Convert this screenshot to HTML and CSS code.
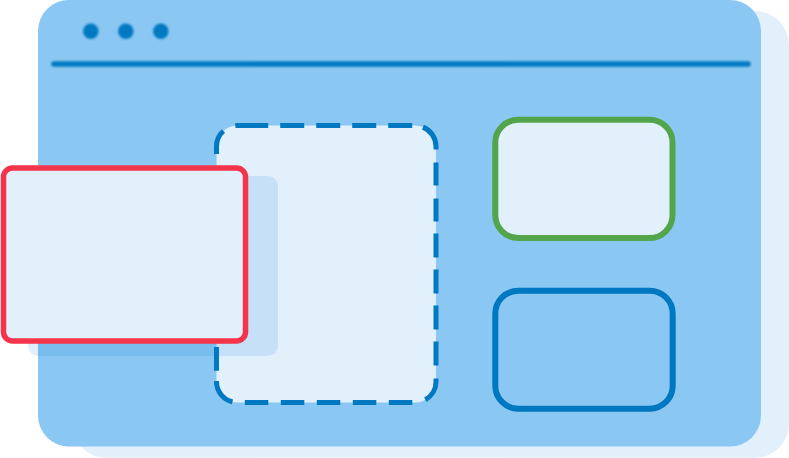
FILE: index.html
```html
<!DOCTYPE html>
<html lang="en">
<head>
<meta charset="utf-8">
<title>Layout illustration</title>
<link rel="stylesheet" href="styles.css">
</head>
<body>
<main class="canvas">
  <svg class="art" viewBox="0 0 789 458" width="789" height="458" xmlns="http://www.w3.org/2000/svg">
    <defs>
      <filter id="soft" x="-5%" y="-50%" width="110%" height="200%">
        <feGaussianBlur stdDeviation="1"/>
      </filter>
    </defs>
    <rect class="back-window" x="72" y="11" width="717" height="446.8" rx="34"/>
    <rect class="main-window" x="38" y="0" width="723" height="446.5" rx="31"/>
    <g class="chrome" filter="url(#soft)">
      <circle cx="90.8" cy="31.3" r="7.8"/>
      <circle cx="125.8" cy="31.3" r="7.8"/>
      <circle cx="160.8" cy="31.3" r="7.8"/>
      <line class="divider" x1="54" y1="64" x2="748" y2="64"/>
    </g>
    <path class="dashed-box" d="M216.5 146.5 A21 21 0 0 1 237.5 125.5 H415 A21 21 0 0 1 436 146.5 V381.5 A21 21 0 0 1 415 402.5 H237.5 A21 21 0 0 1 216.5 381.5 Z"/>
    <rect class="red-shadow" x="28" y="176" width="250" height="180" rx="10"/>
    <rect class="red-box" x="3.5" y="168" width="242" height="173" rx="9"/>
    <rect class="green-box" x="495.3" y="119.7" width="177.2" height="118.3" rx="23"/>
    <rect class="blue-box" x="495.3" y="290.7" width="177.4" height="118" rx="23"/>
  </svg>
</main>
</body>
</html>
```

FILE: styles.css
```css
html, body {
  margin: 0;
  padding: 0;
  background: #ffffff;
  font-family: "Liberation Sans", Arial, sans-serif;
}

.canvas {
  width: 789px;
  height: 458px;
  overflow: hidden;
}

.art {
  display: block;
}

.back-window {
  fill: #e2f0fb;
}

.main-window {
  fill: #8ac7f2;
}

.chrome circle {
  fill: #0079c2;
}

.divider {
  stroke: #0079c2;
  stroke-width: 5.5;
  stroke-linecap: round;
}

.dashed-box {
  fill: #e2f0fb;
  stroke: #0078c2;
  stroke-width: 5;
  stroke-dasharray: 17.3 13.2 33 12 24 12 24 12 24 12 24 10.9 27.6 13 23 13 23 12 24 12 24 12 24 12 24 13 25 13.5 23.5 12.5 23.5 12.5 23.5 12.5 23.5 12.5 23.5 12.5 28 10.3 23.7 12.3 23.7 12.3 23.7 12.3 23.7 12.3 23.7 12.3 23.7 13 8.5 50;
}

.red-shadow {
  fill: rgba(0, 122, 220, 0.12);
}

.red-box {
  fill: #e2f0fb;
  stroke: #f4344a;
  stroke-width: 5.5;
}

.green-box {
  fill: #e2f0fb;
  stroke: #53a54c;
  stroke-width: 6;
}

.blue-box {
  fill: none;
  stroke: #0078c1;
  stroke-width: 6;
}
```
